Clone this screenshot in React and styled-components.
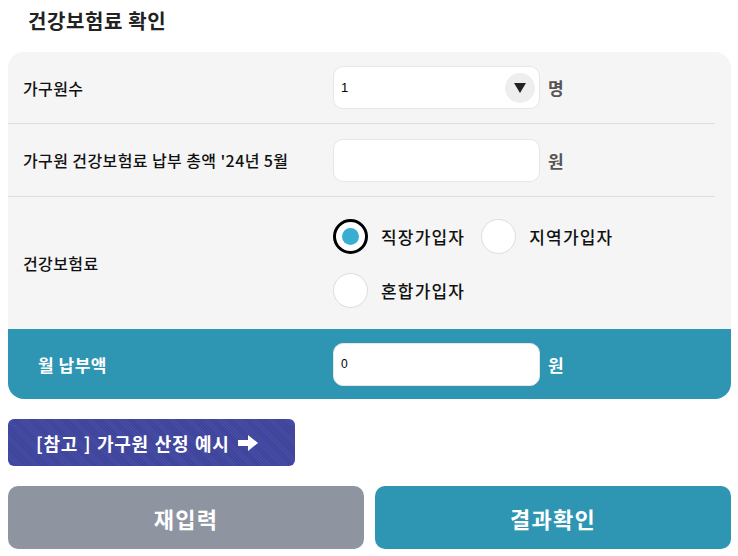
import React from "react";
import styled, { createGlobalStyle } from "styled-components";

const GlobalStyle = createGlobalStyle`
  body {
    margin: 0;
    background: #fff;
    font-family: "Noto Sans CJK KR", "Noto Sans", sans-serif;
  }
`;

const Page = styled.div`
  width: 738px;
  padding-top: 4px;
`;

const Title = styled.h2`
  margin: 0 0 14px 28px;
  font-size: 20px;
  font-weight: 700;
  color: #222;
  letter-spacing: 0.6px;
  line-height: 34px;
`;

const Card = styled.div`
  margin: 0 7px 0 8px;
  background: #f5f5f5;
  border-radius: 16px;
  overflow: hidden;
`;

const Row = styled.div`
  display: grid;
  grid-template-columns: 310px 1fr;
  align-items: center;
  height: ${(p) => p.h}px;
  padding-left: 15px;
  margin-right: 16px;
  border-bottom: ${(p) => (p.last ? "none" : "1px solid #dedede")};
`;

const Label = styled.div`
  font-size: 16px;
  font-weight: 500;
  color: #111;
  letter-spacing: 0.4px;
`;

const Field = styled.div`
  display: flex;
  align-items: center;
  gap: 8px;
`;

const InputBox = styled.div`
  position: relative;
  box-sizing: border-box;
  width: 207px;
  height: 43px;
  background: #fff;
  border: 1px solid #e6e6e6;
  border-radius: 10px;
  display: flex;
  align-items: center;
  padding-left: 7px;
  font-family: "Liberation Sans", Arial, sans-serif;
  font-size: ${(p) => p.fs || 13}px;
  color: #000;
`;

const Arrow = styled.span`
  position: absolute;
  right: 4px;
  top: 50%;
  transform: translateY(-50%);
  width: 30px;
  height: 30px;
  border-radius: 50%;
  background: #eee;
  display: flex;
  align-items: center;
  justify-content: center;
`;

const Unit = styled.span`
  font-size: 17px;
  font-weight: 700;
  color: ${(p) => (p.light ? "#fff" : "#555")};
`;

const Radios = styled.div`
  display: flex;
  flex-wrap: wrap;
  width: 330px;
  row-gap: 19px;
  column-gap: 16px;
`;

const Radio = styled.label`
  display: flex;
  align-items: center;
  gap: 13px;
  font-size: 17px;
  font-weight: 500;
  color: #111;
  letter-spacing: 1.2px;
`;

const Dot = styled.span`
  box-sizing: border-box;
  width: 35px;
  height: 35px;
  border-radius: 50%;
  background: #fff;
  border: ${(p) => (p.on ? "3px solid #000" : "1px solid #dcdcdc")};
  display: flex;
  align-items: center;
  justify-content: center;

  &::after {
    content: "";
    display: ${(p) => (p.on ? "block" : "none")};
    width: 17px;
    height: 17px;
    border-radius: 50%;
    background: #38afd0;
  }
`;

const TotalRow = styled.div`
  display: grid;
  grid-template-columns: 295px 1fr;
  align-items: center;
  height: 70px;
  background: #2e95b3;
  padding-left: 30px;
  box-sizing: border-box;
`;

const TotalLabel = styled.div`
  font-size: 17px;
  font-weight: 700;
  color: #fff;
  letter-spacing: 0.5px;
`;

const RefButton = styled.button`
  display: flex;
  align-items: center;
  gap: 8px;
  margin: 20px 0 0 8px;
  width: 287px;
  height: 47px;
  padding: 0 0 0 28px;
  border: none;
  border-radius: 6px;
  background: repeating-linear-gradient(
    45deg,
    #3d4398 0px,
    #3d4398 1px,
    #474da5 1px,
    #474da5 2px
  );
  color: #fff;
  font-family: inherit;
  font-size: 18px;
  font-weight: 700;
  letter-spacing: 0.7px;
  word-spacing: 1px;
  white-space: nowrap;
`;

const Actions = styled.div`
  display: grid;
  grid-template-columns: 356px 356px;
  gap: 11px;
  margin: 20px 0 0 8px;
`;

const ActionButton = styled.button`
  height: 63px;
  border: none;
  border-radius: 10px;
  background: ${(p) => (p.primary ? "#2e95b3" : "#8e95a1")};
  color: #fff;
  font-family: inherit;
  font-size: 22px;
  font-weight: 700;
  letter-spacing: 1.2px;
`;

export default function App() {
  return (
    <Page>
      <GlobalStyle />
      <Title>건강보험료 확인</Title>
      <Card>
        <Row h={71}>
          <Label>가구원수</Label>
          <Field>
            <InputBox>
              1
              <Arrow>
                <svg width="12" height="10" viewBox="0 0 12 10">
                  <path d="M0 0 H12 L6 10 Z" fill="#222" />
                </svg>
              </Arrow>
            </InputBox>
            <Unit>명</Unit>
          </Field>
        </Row>
        <Row h={72}>
          <Label>가구원 건강보험료 납부 총액 '24년 5월</Label>
          <Field>
            <InputBox />
            <Unit>원</Unit>
          </Field>
        </Row>
        <Row h={132} last>
          <Label>건강보험료</Label>
          <Radios>
            <Radio>
              <Dot on />
              직장가입자
            </Radio>
            <Radio>
              <Dot />
              지역가입자
            </Radio>
            <Radio>
              <Dot />
              혼합가입자
            </Radio>
          </Radios>
        </Row>
        <TotalRow>
          <TotalLabel>월 납부액</TotalLabel>
          <Field>
            <InputBox fs={12}>0</InputBox>
            <Unit light>원</Unit>
          </Field>
        </TotalRow>
      </Card>
      <RefButton>
        [참고 ] 가구원 산정 예시
        <svg width="20" height="16" viewBox="0 0 20 16">
          <path d="M0 5 H10 V0 L20 8 L10 16 V11 H0 Z" fill="#fff" />
        </svg>
      </RefButton>
      <Actions>
        <ActionButton>재입력</ActionButton>
        <ActionButton primary>결과확인</ActionButton>
      </Actions>
    </Page>
  );
}
